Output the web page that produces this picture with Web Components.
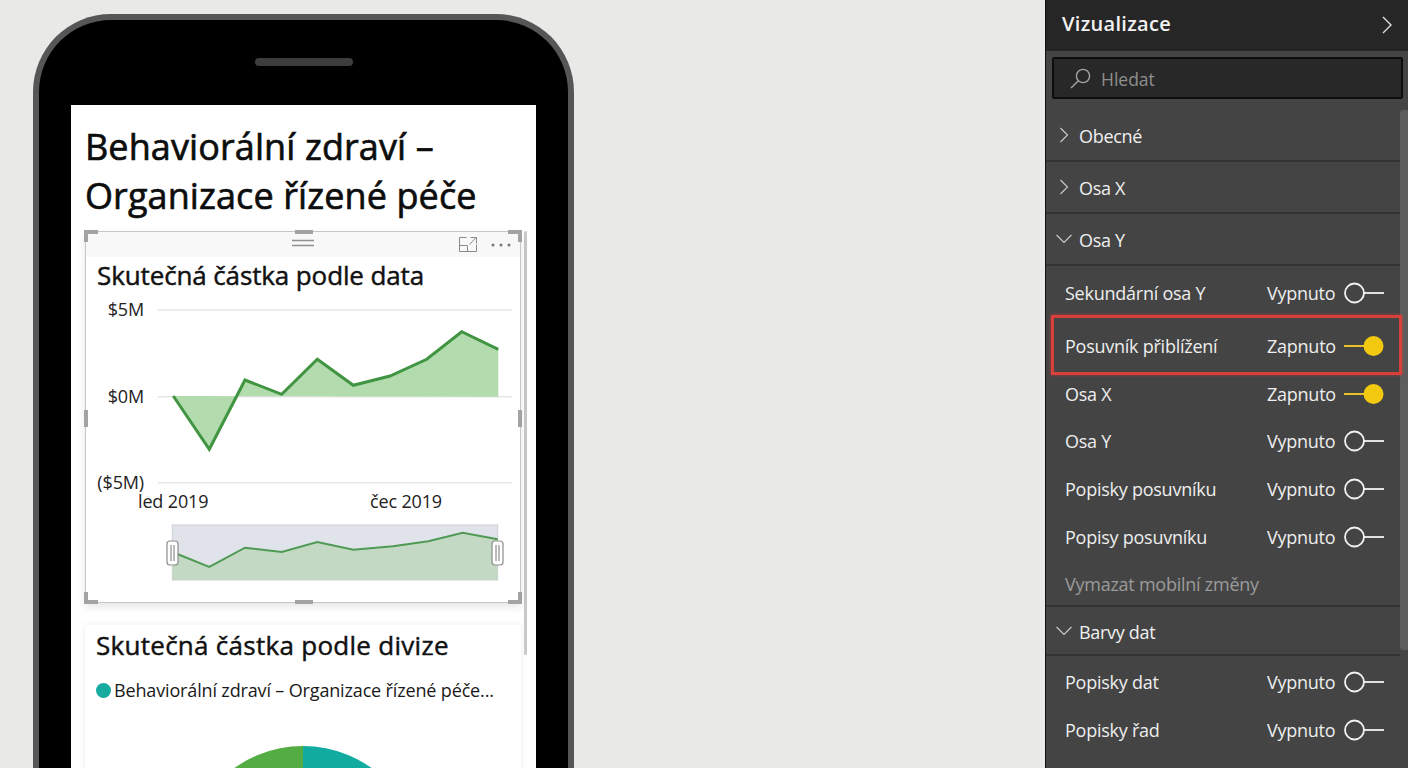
<!DOCTYPE html>
<html lang="cs"><head><meta charset="utf-8"><title>Vizualizace</title>
<style>
html,body{margin:0;height:768px;overflow:hidden;background:#e9e9e8;font-family:"Open Sans","Noto Sans",sans-serif}
body{display:flex;justify-content:space-between;align-items:flex-start}
</style></head><body>
<phone-frame>
  <report-title>Behaviorální zdraví – Organizace řízené péče</report-title>
  <line-visual></line-visual>
  <pie-visual></pie-visual>
</phone-frame>
<viz-pane>
  <pane-section>Obecné</pane-section>
  <pane-section>Osa X</pane-section>
  <pane-section open>Osa Y</pane-section>
  <pane-toggle h="54">Sekundární osa Y</pane-toggle>
  <pane-toggle h="52" on boxed>Posuvník přiblížení</pane-toggle>
  <pane-toggle h="44" on>Osa X</pane-toggle>
  <pane-toggle h="50">Osa Y</pane-toggle>
  <pane-toggle h="46">Popisky posuvníku</pane-toggle>
  <pane-toggle h="50">Popisy posuvníku</pane-toggle>
  <pane-link>Vymazat mobilní změny</pane-link>
  <pane-section open h="49">Barvy dat</pane-section>
  <pane-toggle h="52">Popisky dat</pane-toggle>
  <pane-toggle h="44">Popisky řad</pane-toggle>
</viz-pane>
<script>
function def(name, html, init){
  customElements.define(name, class extends HTMLElement{
    connectedCallback(){
      if(this.shadowRoot) return;
      this.attachShadow({mode:'open'}).innerHTML = typeof html==='function'?html(this):html;
      if(init) init(this);
    }
  });
}
def('phone-frame',`<style>
:host{display:block;box-sizing:border-box;width:541px;height:754px;margin:14px 0 0 33px;background:#000;border:6px solid #565656;border-bottom:0;border-radius:78px 78px 0 0;flex:none;overflow:hidden}
.top{height:85px;display:flex;justify-content:center;padding-top:38px;box-sizing:border-box}
.sp{width:98px;height:8px;border-radius:4px;background:#3d3d3d}
.screen{margin:0 32px 0 32px;background:#fff;height:800px;display:flex}
.content{flex:none;padding:0 0 0 14px;box-sizing:border-box;width:446px}
.track{width:3px;height:424px;margin:126px 0 0 7px;background:#c9c9c9;border-radius:2px;flex:none}
</style><div class="top"><div class="sp"></div></div><div class="screen"><div class="content"><slot></slot></div><div class="track"></div></div>`);
def('report-title',`<style>
:host{display:block;color:#0d0d0d;font-size:36px;line-height:48.5px;padding:18px 0 0 0;letter-spacing:.1px;-webkit-text-stroke:.65px #0d0d0d;height:100px;box-sizing:content-box;width:440px}
</style><slot></slot>`);
const pts=[[173.3,396],[209.3,449.3],[245,380],[281.7,394.3],[317.3,359.3],[353.3,385.3],[390,376],[426.7,359.3],[461.7,331.7],[498.3,349.3]];
const mini=[[172.3,552],[209.3,567],[245,547.7],[281.7,552],[317.3,542],[353.3,549.7],[393,546.3],[428.3,541.3],[462.7,532.7],[497.7,539.3]];
const P=a=>a.map(p=>p.join(',')).join(' ');
const hd=(x)=>`<rect x="${x}" y="541" width="11" height="24" rx="3" fill="#fff" stroke="#8d8d8d" stroke-width="1.2"/><path d="M${x+4} 545v16M${x+7} 545v16" stroke="#777" stroke-width="1"/>`;
def('line-visual',`<style>
:host{display:block;position:relative;box-sizing:border-box;width:436px;height:372px;margin-top:8px;border:1px solid #c6c6c6;box-shadow:0 4px 8px rgba(0,0,0,.1);background:#fff}
.bar{height:25px;background:#f8f8f8;display:flex;align-items:center;justify-content:flex-end;gap:14px;padding-right:9px}
.t{font-size:26px;line-height:36px;color:#111;-webkit-text-stroke:.45px #111;padding:0 0 0 11px;letter-spacing:-.12px}
svg.c{display:block;position:absolute;left:-86px;top:-232px;overflow:visible}
.m{position:absolute;background:#a3a3a3}
svg text{font:18px "Open Sans",sans-serif;fill:#222;letter-spacing:-.15px}
</style>
<div class="bar"><svg width="18" height="15" viewBox="0 0 18 15" fill="none" stroke="#8a8a8a"><path d="M7.500.500H.500v14h17V7.500M.500 8.500h8v6M10.500 7.500l6.500-7M11.500 .500h6v6"/></svg><svg width="20" height="4" viewBox="0 0 20 4" fill="#777"><circle cx="2" cy="2" r="1.5"/><circle cx="10" cy="2" r="1.5"/><circle cx="18" cy="2" r="1.5"/></svg></div>
<div class="t">Skutečná částka podle data</div>
<svg class="c" width="600" height="700">
 <g stroke="#e6e6e6" stroke-width="1.5"><path d="M158 310H512M158 396.7H512M158 482.7H512"/></g>
 <g text-anchor="end"><text x="144" y="316">$5M</text><text x="144" y="403">$0M</text><text x="144" y="489">($5M)</text></g>
 <text x="138" y="508">led 2019</text><text x="370" y="508">čec 2019</text>
 <polygon points="${P(pts)} 498.3,396.7" fill="#b3dcae"/>
 <polyline points="${P(pts)}" fill="none" stroke="#419441" stroke-width="3"/>
 <rect x="172.3" y="525" width="325.4" height="55" fill="#e1e3ea" stroke="#cfd0d6"/>
 <polygon points="${P(mini)} 497.7,580 172.3,580" fill="#c4d9c4"/>
 <polyline points="${P(mini)}" fill="none" stroke="#4f9a54" stroke-width="2"/>
 ${hd(167)}${hd(492)}
 <path d="M292 240.500h22M292 245.500h22" stroke="#8f8f8f" stroke-width="1.300"/>
</svg>
<i class="m" style="left:-2px;top:-2px;width:14px;height:4px"></i><i class="m" style="left:-2px;top:-2px;width:4px;height:12px"></i>
<i class="m" style="right:-2px;top:-2px;width:14px;height:4px"></i><i class="m" style="right:-2px;top:-2px;width:4px;height:12px"></i>
<i class="m" style="left:-2px;bottom:-2px;width:14px;height:4px"></i><i class="m" style="left:-2px;bottom:-2px;width:4px;height:12px"></i>
<i class="m" style="right:-2px;bottom:-2px;width:14px;height:4px"></i><i class="m" style="right:-2px;bottom:-2px;width:4px;height:12px"></i>
<i class="m" style="left:-2px;top:178px;width:4px;height:17px"></i><i class="m" style="right:-2px;top:178px;width:4px;height:17px"></i>
<i class="m" style="left:209px;bottom:-2px;width:18px;height:4px"></i><i class="m" style="left:209px;top:-2px;width:18px;height:4px"></i>`);
def('pie-visual',`<style>
:host{display:block;box-sizing:border-box;width:436px;height:300px;margin-top:22px;background:#fff;border-radius:4px;box-shadow:0 0 6px rgba(0,0,0,.08);padding:1px 0 0 11px}
.t{font-size:26px;line-height:38px;color:#111;-webkit-text-stroke:.45px #111;letter-spacing:.28px}
.l{display:flex;align-items:center;gap:3px;font-size:18px;line-height:24px;color:#1a1a1a;margin-top:14px;letter-spacing:-.15px;white-space:nowrap}
.d{width:15px;height:15px;border-radius:50%;background:#15ab9e;flex:none}
svg{display:block;margin:44px 0 0 -11px}
</style><div class="t">Skutečná částka podle divize</div><div class="l"><span class="d"></span>Behaviorální zdraví – Organizace řízené péče...</div>
<svg width="436" height="240" viewBox="0 0 436 240"><path d="M218 118V0A118 118 0 0 1 218 236Z" fill="#12ab9f"/><path d="M218 118V0A118 118 0 0 0 218 236Z" fill="#54ad43"/></svg>`);
def('viz-pane',`<style>
:host{display:flex;flex-direction:column;box-sizing:border-box;width:363px;height:768px;flex:none;background:#444;border-left:1px solid #111;color:#eee}
.h{height:47px;flex:none;background:#262626;display:flex;align-items:center;justify-content:space-between;padding:0 15px 4px 16px;font-size:20px;font-weight:600;color:#f2f2f2;letter-spacing:.3px}
.h svg{margin-top:2px}
.s{height:42px;flex:none;margin:6px 5px 0 6px;box-sizing:border-box;background:#282828;border:2px solid #0d0d0d;border-radius:2px;display:flex;align-items:center;gap:10px;padding-left:16px;font-size:17.5px;color:#8f8f8f}
.s span{padding-top:2px}
.b{display:flex;flex:1;margin-top:11px;min-height:0}
.l{flex:1;min-width:0}
.sb{width:8px;flex:none}.th{height:540px;background:#5d5d5d;border-radius:3px 0 0 3px}
</style>
<div class="h"><span>Vizualizace</span><svg width="12" height="18" viewBox="0 0 12 18" fill="none" stroke="#ddd" stroke-width="1.4"><path d="M2 1l8 8-8 8"/></svg></div>
<div class="s"><svg width="21" height="21" viewBox="0 0 21 21" fill="none" stroke="#a5a5a5" stroke-width="1.4"><circle cx="13" cy="8" r="6.6"/><path d="M8.400 12.800L1 20"/></svg><span>Hledat</span></div>
<div class="b"><div class="l"><slot></slot></div><div class="sb"><div class="th"></div></div></div>`);
def('pane-section',el=>`<style>
:host{display:flex;align-items:center;box-sizing:border-box;height:${el.getAttribute('h')||52}px;border-bottom:2px solid #333;font-size:18px;color:#f0f0f0;letter-spacing:-.3px}
.i{width:33px;flex:none;display:flex;justify-content:center;padding-left:2px;box-sizing:border-box}
.x{padding-top:2px}
</style><span class="i">${el.hasAttribute('open')
 ?'<svg width="18" height="10" viewBox="0 0 18 10" fill="none" stroke="#ccc" stroke-width="1.1"><path d="M1.500 1l7.500 7.500L16.500 1"/></svg>'
 :'<svg width="10" height="16" viewBox="0 0 10 16" fill="none" stroke="#ccc" stroke-width="1.1"><path d="M1.500 1l7 7-7 7"/></svg>'}</span><span class="x"><slot></slot></span>`);
def('pane-toggle',el=>{
 const on=el.hasAttribute('on');
 return `<style>
:host{display:flex;position:relative;align-items:center;box-sizing:border-box;height:${el.getAttribute('h')}px;padding:0 15px 0 19px;font-size:18px;color:#eee;letter-spacing:-.25px}
.n{flex:1;white-space:nowrap;margin-top:-1px}
.v{width:77px;flex:none}
.r{position:absolute;left:5px;right:-2px;top:-5px;bottom:-3px;border:3px solid #d8403b;box-shadow:0 0 3px rgba(216,64,59,.7);pointer-events:none;display:${el.hasAttribute('boxed')?'block':'none'}}
</style><span class="n"><slot></slot></span><span class="v">${on?'Zapnuto':'Vypnuto'}</span>
<svg width="41" height="22" viewBox="0 0 41 22" fill="none">${on
 ?'<path d="M0 11H22" stroke="#e8c32a" stroke-width="2"/><circle cx="29.500" cy="11" r="10" fill="#f2c811"/>'
 :'<circle cx="10.500" cy="11" r="9.500" stroke="#f2f2f2" stroke-width="1.800"/><path d="M20 11H40" stroke="#f2f2f2" stroke-width="1.800"/>'}</svg><div class="r"></div>`});
def('pane-link',`<style>
:host{display:flex;align-items:center;box-sizing:border-box;height:45px;padding-left:19px;font-size:18px;color:#9b9b9b;border-bottom:2px solid #333;letter-spacing:-.25px}
</style><slot></slot>`);
</script>
</body></html>
